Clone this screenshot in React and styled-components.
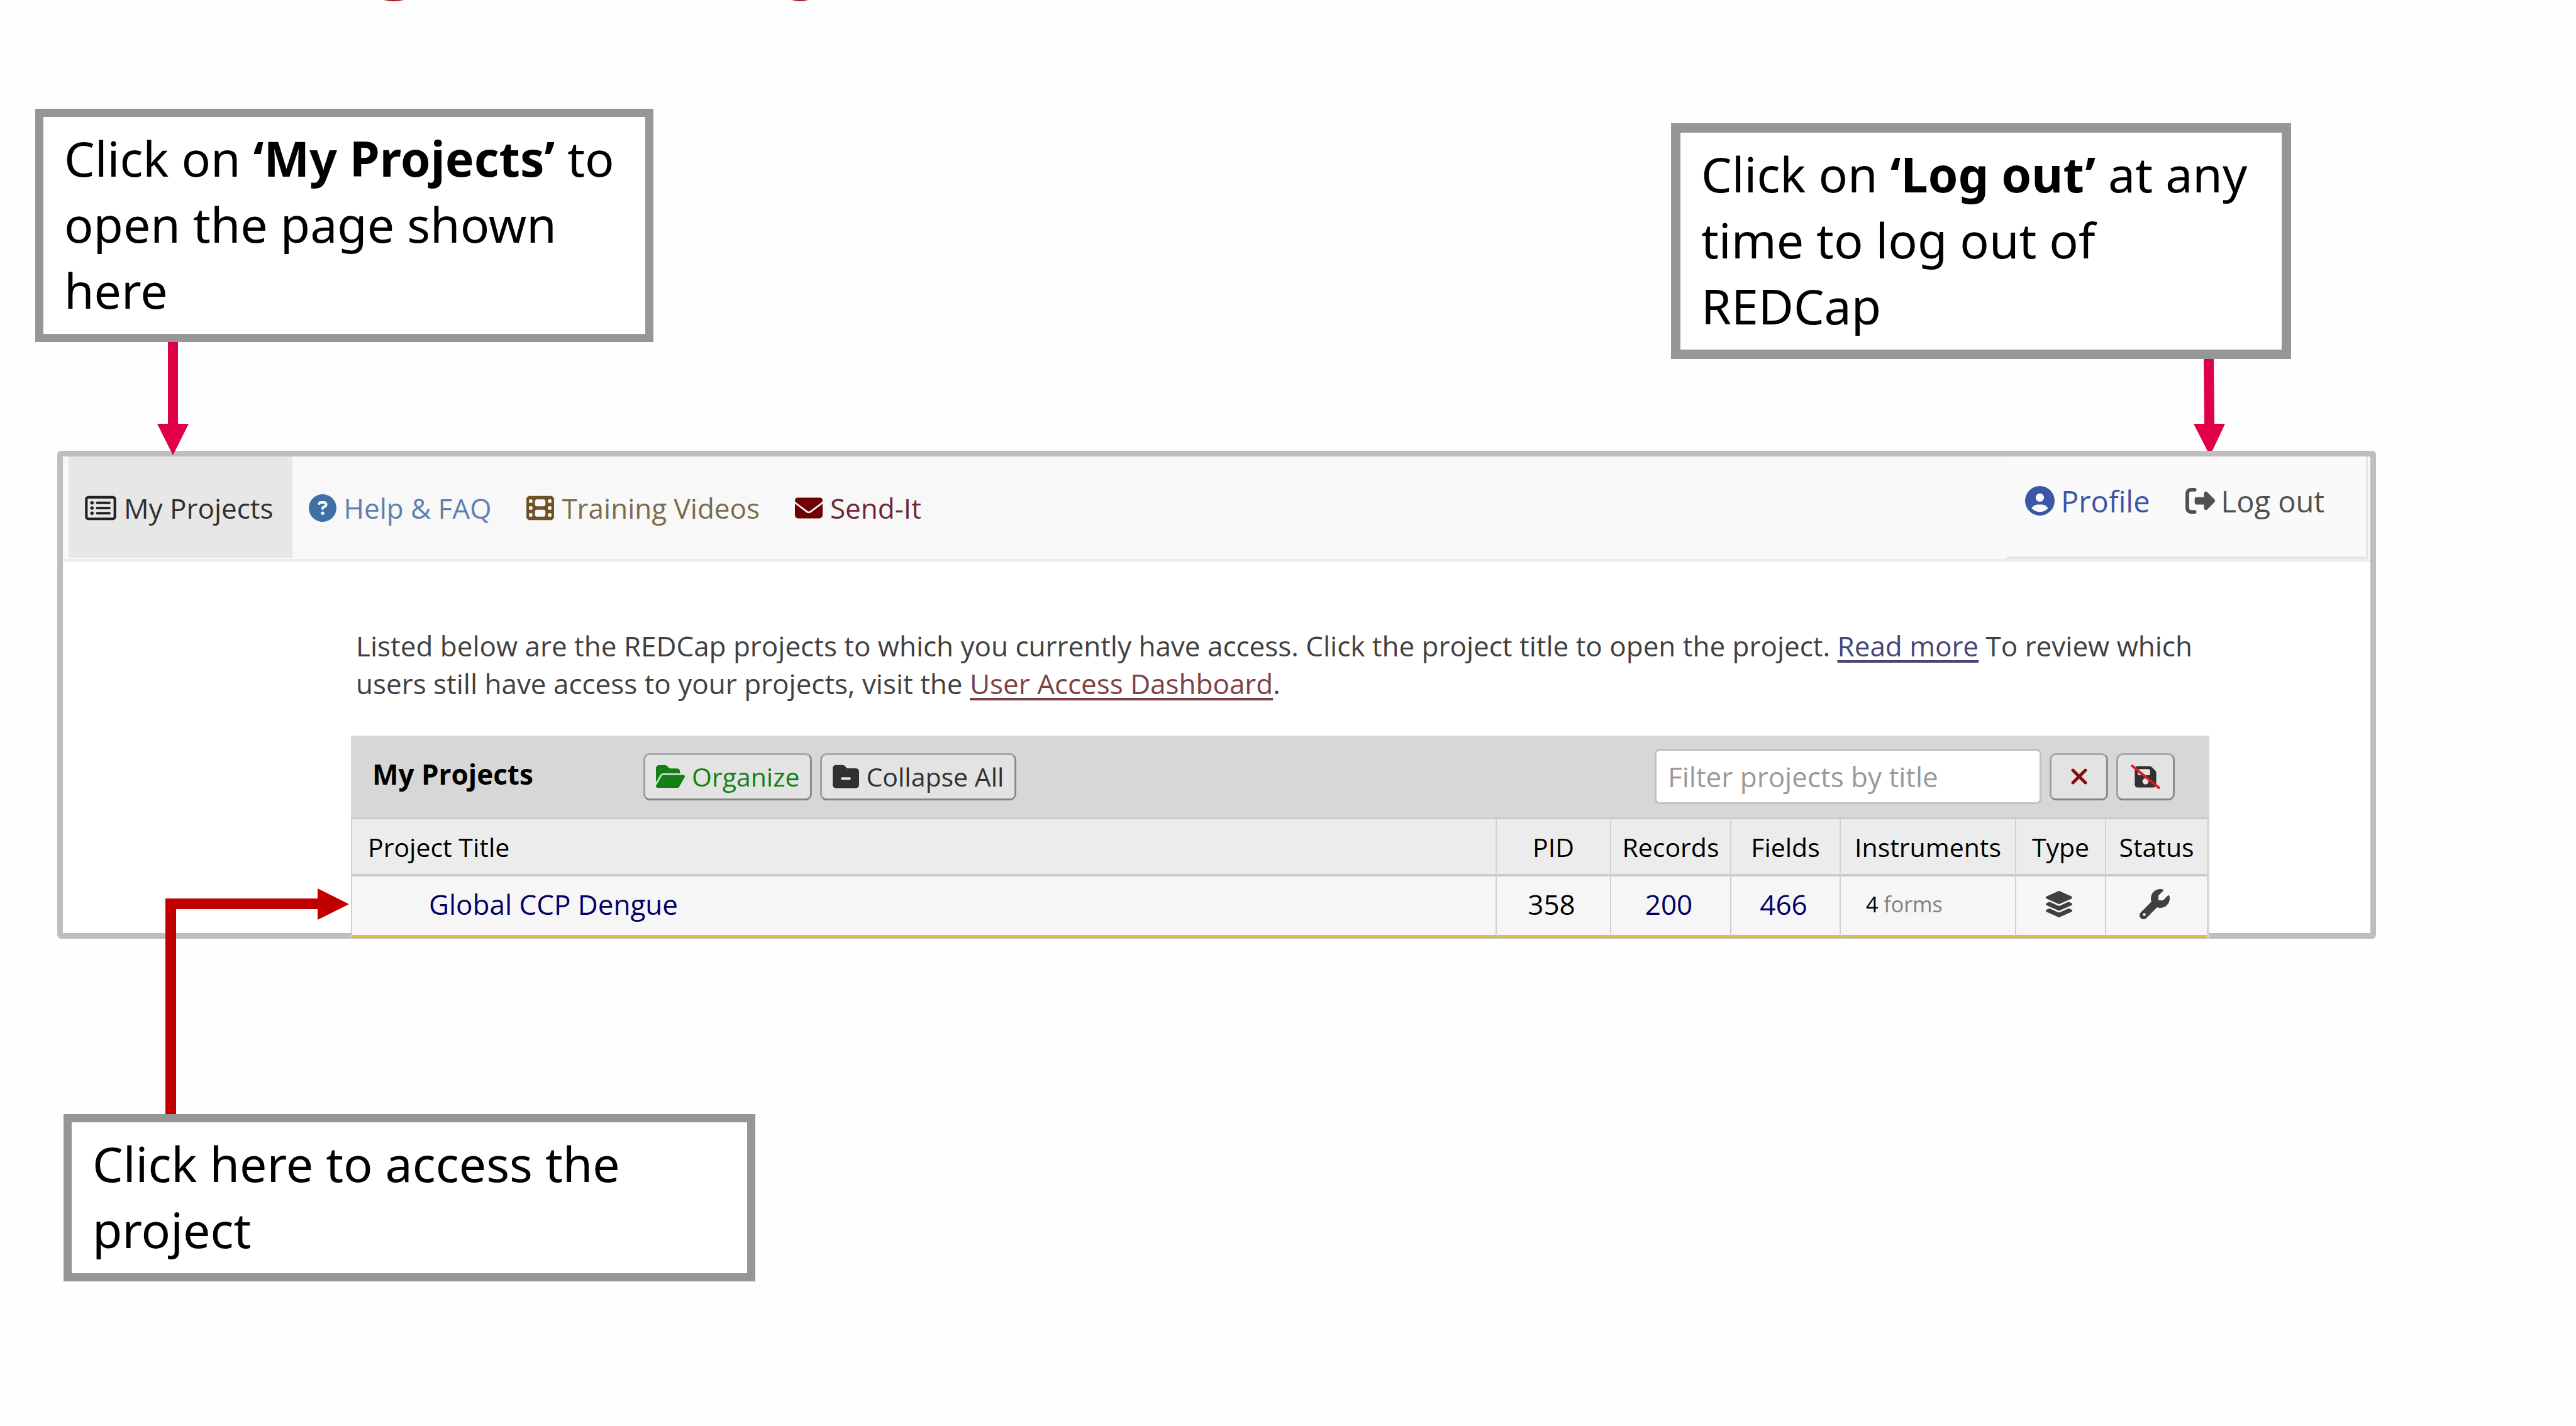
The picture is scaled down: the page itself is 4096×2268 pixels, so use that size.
import React from "react";
import styled, { createGlobalStyle } from "styled-components";
import {
  FaRegRectangleList,
  FaCircleQuestion,
  FaFilm,
  FaEnvelope,
  FaCircleUser,
  FaRightFromBracket,
  FaFolderOpen,
  FaFolderMinus,
  FaXmark,
  FaFloppyDisk,
  FaWrench,
} from "react-icons/fa6";
import { FaLayerGroup } from "react-icons/fa";

const GlobalStyle = createGlobalStyle`
  *, *::before, *::after { box-sizing: border-box; }
  body {
    margin: 0;
    background: #fefefe;
    color: #000;
    font-family: "Open Sans", "Noto Sans", sans-serif;
    overflow-x: hidden;
  }
  svg { display: block; flex: none; }
  a { color: inherit; text-decoration: none; }
`;

const Slide = styled.main`
  position: relative;
  padding: 173px 318px 0 91px;
`;

const HeadingEdge = styled.svg`
  position: absolute;
  top: 0;
  left: 600px;
`;

const TopCallouts = styled.div`
  display: flex;
  justify-content: space-between;
  align-items: flex-start;
  margin: 0 135px 146px -35px;
`;

const Callout = styled.section`
  position: relative;
  width: ${(p) => p.$width}px;
  margin-top: ${(p) => p.$drop || 0}px;
  padding: 13px 16px 17px 33px;
  border: ${(p) => p.$border || 13}px solid #969696;
  background: #fff;
  font-family: "Noto Sans", "Open Sans", sans-serif;
  font-size: 77px;
  line-height: 105px;

  p { margin: 0; }
`;

const DownArrow = styled.svg`
  position: absolute;
  top: 100%;
  left: ${(p) => p.$left}px;
  margin-top: ${(p) => p.$gap}px;
  z-index: ${(p) => (p.$front ? 2 : 0)};
`;

const AppWindow = styled.section`
  position: relative;
  z-index: 1;
  border: 9px solid #bebebe;
  border-radius: 6px;
  background: #fff;
`;

const NavBar = styled.header`
  display: flex;
  height: 167px;
  padding-left: 9px;
  border-bottom: 4px solid #ececec;
  background: #f8f8f8;
`;

const MainNav = styled.nav`
  display: flex;
  height: 161px;
`;

const NavLink = styled.a`
  display: flex;
  align-items: center;
  gap: 12px;
  padding: 3px 30px 0 26px;
  background: ${(p) => (p.$active ? "#e7e7e7" : "transparent")};
  color: ${(p) => p.$text};
  font-size: 44px;
  line-height: 60px;

  svg {
    width: ${(p) => p.$iconWidth}px;
    height: 44px;
    color: ${(p) => p.$icon};
  }
`;

const UserNav = styled.nav`
  display: flex;
  gap: 56px;
  height: 163px;
  margin-left: auto;
  margin-right: 4px;
  padding: 0 66px 18px 29px;
  border-right: 3px solid #e6e6e6;
  border-bottom: 4px solid #e6e6e6;
  background: #fafafa;
`;

const UserLink = styled.a`
  display: flex;
  align-items: center;
  gap: 10px;
  color: ${(p) => p.$color};
  font-size: 47px;
  line-height: 60px;
`;

const Content = styled.div`
  margin: 104px 256px -8px 458px;
`;

const Intro = styled.p`
  margin: 0 0 53px 8px;
  color: #404040;
  font-size: 44px;
  line-height: 60px;
`;

const TextLink = styled.a`
  color: ${(p) => p.$color};
  text-decoration: underline;
  text-decoration-thickness: 4px;
  text-underline-offset: 6px;
`;

const ProjectBar = styled.div`
  display: flex;
  align-items: center;
  height: 133px;
  padding: 0 55px 0 34px;
  border-bottom: 3px solid #cbcbcb;
  background: #d7d7d7;
`;

const BarTitle = styled.h2`
  width: 431px;
  margin: 0;
  padding-bottom: 8px;
  font-size: 44px;
  line-height: 60px;
`;

const ButtonGroup = styled.div`
  display: flex;
  align-items: center;
  gap: 13px;
  margin-left: ${(p) => (p.$end ? "auto" : "0")};
`;

const Button = styled.button`
  display: flex;
  align-items: center;
  justify-content: center;
  gap: 11px;
  min-width: 93px;
  height: 75px;
  padding: 0 17px;
  border: 3px solid;
  border-color: #a6a6a6 #8c8c8c #848484 #a0a0a0;
  border-radius: 10px;
  background: #e3e3e3;
  color: ${(p) => p.$color};
  font: 41px/56px "Open Sans", "Noto Sans", sans-serif;
`;

const FilterInput = styled.input`
  width: 615px;
  height: 88px;
  padding: 0 18px;
  border: 3px solid #c0c0c0;
  border-radius: 8px;
  background: #fff;
  font: 44px/60px "Open Sans", "Noto Sans", sans-serif;

  &::placeholder { color: #999; opacity: 1; }
`;

const NoSave = styled.span`
  display: grid;
  place-items: center;

  > * { grid-area: 1 / 1; }
`;

const ProjectTable = styled.table`
  width: 100%;
  border-collapse: separate;
  border-spacing: 0;
  border-left: 2px solid #cfcfcf;
  border-right: 4px solid #d6d6d6;
  table-layout: fixed;
  line-height: 60px;
`;

const Col = styled.col`
  width: ${(p) => (p.$width ? `${p.$width}px` : "auto")};
`;

const HeadCell = styled.th`
  height: 91px;
  padding: ${(p) => (p.$first ? "0 25px" : "0")};
  border-right: 2px solid #d3d3d3;
  border-bottom: 4px solid #cbcbcb;
  background: #ececec;
  font-size: 41px;
  font-weight: 400;
  text-align: ${(p) => (p.$first ? "left" : "center")};

  &:last-child { border-right: 0; }
`;

const Cell = styled.td`
  height: 98px;
  padding: ${(p) => (p.$first ? "0 122px 5px" : "0 6px 5px 0")};
  border-right: 2px solid #cfcfcf;
  border-bottom: 5px solid #e6b650;
  background: #f6f6f6;
  font-size: 44px;
  text-align: ${(p) => (p.$first ? "left" : "center")};

  &:last-child { border-right: 0; }
  a { color: #000066; }
  svg { margin: 0 auto; color: #404040; }
`;

const Forms = styled.div`
  padding-left: 40px;
  color: #808080;
  font-size: 34px;
  text-align: left;

  b { color: #000; font-weight: 400; }
`;

const AccessNote = styled.div`
  position: relative;
  z-index: 2;
  margin: 279px 0 0 10px;
`;

const ElbowArrow = styled.svg`
  position: absolute;
  left: 162px;
  bottom: 100%;
  margin-bottom: -2px;
`;

const NAV = [
  { label: "My Projects", Icon: FaRegRectangleList, icon: "#222", text: "#303030", active: true, width: 50 },
  { label: "Help & FAQ", Icon: FaCircleQuestion, icon: "#3e70a8", text: "#5f7fae", width: 44 },
  { label: "Training Videos", Icon: FaFilm, icon: "#6f5224", text: "#7b6c4a", width: 44 },
  { label: "Send-It", Icon: FaEnvelope, icon: "#700004", text: "#6e2733", width: 44 },
];

export default function App() {
  return (
    <Slide>
      <GlobalStyle />
      <HeadingEdge width="700" height="2" viewBox="0 0 700 2" aria-hidden="true">
        <path d="M10 0H42Q26 4 10 0ZM659 0H685Q672 4 659 0Z" fill="#a8191c" />
      </HeadingEdge>

      <TopCallouts>
        <Callout $width={983}>
          <p>Click on <b>‘My Projects’</b> to open the page shown here</p>
          <DownArrow $left={181} $gap={13} $front width="50" height="180" viewBox="0 0 50 180" aria-hidden="true">
            <path d="M17 0H33V130H50L25 180L0 130H17Z" fill="#df0046" />
          </DownArrow>
        </Callout>
        <Callout $width={986} $drop={23} $border={15}>
          <p>Click on <b>‘Log out’</b> at any time to log out of REDCap</p>
          <DownArrow $left={816} $gap={15} width="50" height="154" viewBox="0 0 50 154" aria-hidden="true">
            <path d="M16 0H32L33 103H50L26 154L0 103H17Z" fill="#df0046" />
          </DownArrow>
        </Callout>
      </TopCallouts>

      <AppWindow>
        <NavBar>
          <MainNav>
            {NAV.map(({ label, Icon, icon, text, active, width }) => (
              <NavLink key={label} href="#" $active={active} $icon={icon} $text={text} $iconWidth={width}>
                <Icon />
                {label}
              </NavLink>
            ))}
          </MainNav>
          <UserNav>
            <UserLink href="#" $color="#3a58a4"><FaCircleUser size={47} />Profile</UserLink>
            <UserLink href="#" $color="#505050"><FaRightFromBracket size={47} />Log out</UserLink>
          </UserNav>
        </NavBar>

        <Content>
          <Intro>
            Listed below are the REDCap projects to which you currently have access. Click the
            project title to open the project.{" "}
            <TextLink href="#" $color="#454578">Read more</TextLink> To review which users still
            have access to your projects, visit the{" "}
            <TextLink href="#" $color="#7d4145">User Access Dashboard</TextLink>.
          </Intro>

          <ProjectBar>
            <BarTitle>My Projects</BarTitle>
            <ButtonGroup>
              <Button type="button" $color="#138013"><FaFolderOpen size={46} />Organize</Button>
              <Button type="button" $color="#303030"><FaFolderMinus size={42} />Collapse All</Button>
            </ButtonGroup>
            <ButtonGroup $end>
              <FilterInput type="text" aria-label="Filter projects by title" placeholder="Filter projects by title" />
              <Button type="button" $color="#8b0a0a" aria-label="Clear filter"><FaXmark size={40} /></Button>
              <Button type="button" $color="#303030" aria-label="Do not save filter">
                <NoSave>
                  <FaFloppyDisk size={39} />
                  <svg width="47" height="39" viewBox="0 0 47 39" aria-hidden="true">
                    <path d="M1 1L46 38" stroke="#e8141e" strokeWidth="4" />
                  </svg>
                </NoSave>
              </Button>
            </ButtonGroup>
          </ProjectBar>

          <ProjectTable>
            <colgroup>
              <Col />
              <Col $width={182} />
              <Col $width={191} />
              <Col $width={174} />
              <Col $width={279} />
              <Col $width={143} />
              <Col $width={160} />
            </colgroup>
            <thead>
              <tr>
                <HeadCell $first>Project Title</HeadCell>
                <HeadCell>PID</HeadCell>
                <HeadCell>Records</HeadCell>
                <HeadCell>Fields</HeadCell>
                <HeadCell>Instruments</HeadCell>
                <HeadCell>Type</HeadCell>
                <HeadCell>Status</HeadCell>
              </tr>
            </thead>
            <tbody>
              <tr>
                <Cell $first><a href="#">Global CCP Dengue</a></Cell>
                <Cell>358</Cell>
                <Cell><a href="#">200</a></Cell>
                <Cell><a href="#">466</a></Cell>
                <Cell><Forms><b>4</b> forms</Forms></Cell>
                <Cell><FaLayerGroup size={42} /></Cell>
                <Cell><FaWrench size={48} /></Cell>
              </tr>
            </tbody>
          </ProjectTable>
        </Content>
      </AppWindow>

      <AccessNote>
        <ElbowArrow width="292" height="361" viewBox="0 0 292 361" aria-hidden="true">
          <path d="M0 16H242V0L292 25L242 50V33H17V361H0Z" fill="#c00000" />
        </ElbowArrow>
        <Callout $width={1100}>
          <p>Click here to access the project</p>
        </Callout>
      </AccessNote>
    </Slide>
  );
}
